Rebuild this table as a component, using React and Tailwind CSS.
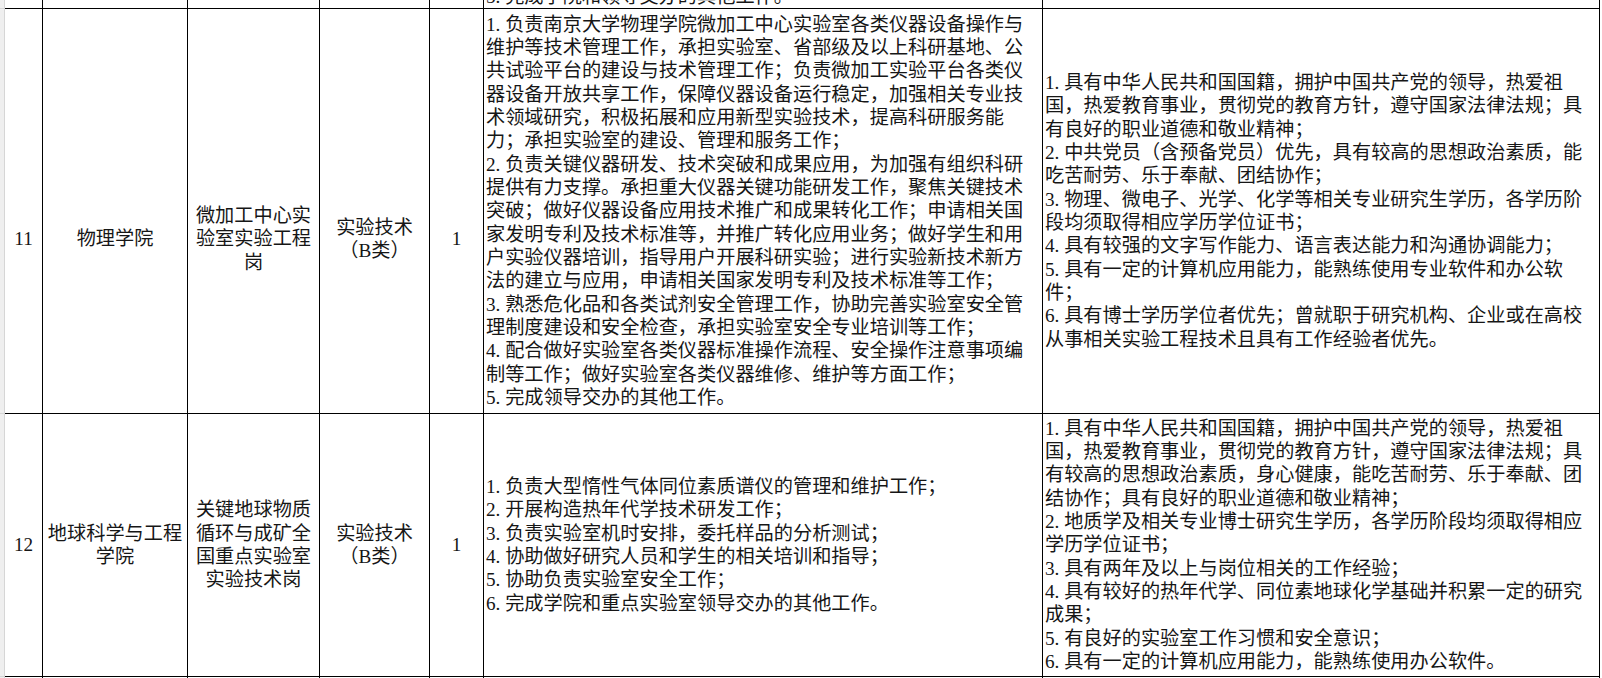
import React from 'react';

const rows = [
  {
    no: '11',
    college: ['物理学院'],
    post: ['微加工中心实', '验室实验工程', '岗'],
    kind: ['实验技术', '（B类）'],
    count: '1',
    shift: true,
    duties: [
      '1. 负责南京大学物理学院微加工中心实验室各类仪器设备操作与',
      '维护等技术管理工作，承担实验室、省部级及以上科研基地、公',
      '共试验平台的建设与技术管理工作；负责微加工实验平台各类仪',
      '器设备开放共享工作，保障仪器设备运行稳定，加强相关专业技',
      '术领域研究，积极拓展和应用新型实验技术，提高科研服务能',
      '力；承担实验室的建设、管理和服务工作；',
      '2. 负责关键仪器研发、技术突破和成果应用，为加强有组织科研',
      '提供有力支撑。承担重大仪器关键功能研发工作，聚焦关键技术',
      '突破；做好仪器设备应用技术推广和成果转化工作；申请相关国',
      '家发明专利及技术标准等，并推广转化应用业务；做好学生和用',
      '户实验仪器培训，指导用户开展科研实验；进行实验新技术新方',
      '法的建立与应用，申请相关国家发明专利及技术标准等工作；',
      '3. 熟悉危化品和各类试剂安全管理工作，协助完善实验室安全管',
      '理制度建设和安全检查，承担实验室安全专业培训等工作；',
      '4. 配合做好实验室各类仪器标准操作流程、安全操作注意事项编',
      '制等工作；做好实验室各类仪器维修、维护等方面工作；',
      '5. 完成领导交办的其他工作。',
    ],
    reqs: [
      '1. 具有中华人民共和国国籍，拥护中国共产党的领导，热爱祖',
      '国，热爱教育事业，贯彻党的教育方针，遵守国家法律法规；具',
      '有良好的职业道德和敬业精神；',
      '2. 中共党员（含预备党员）优先，具有较高的思想政治素质，能',
      '吃苦耐劳、乐于奉献、团结协作；',
      '3. 物理、微电子、光学、化学等相关专业研究生学历，各学历阶',
      '段均须取得相应学历学位证书；',
      '4. 具有较强的文字写作能力、语言表达能力和沟通协调能力；',
      '5. 具有一定的计算机应用能力，能熟练使用专业软件和办公软',
      '件；',
      '6. 具有博士学历学位者优先；曾就职于研究机构、企业或在高校',
      '从事相关实验工程技术且具有工作经验者优先。',
    ],
  },
  {
    no: '12',
    college: ['地球科学与工程', '学院'],
    post: ['关键地球物质', '循环与成矿全', '国重点实验室', '实验技术岗'],
    kind: ['实验技术', '（B类）'],
    count: '1',
    shift: false,
    duties: [
      '1. 负责大型惰性气体同位素质谱仪的管理和维护工作；',
      '2. 开展构造热年代学技术研发工作；',
      '3. 负责实验室机时安排，委托样品的分析测试；',
      '4. 协助做好研究人员和学生的相关培训和指导；',
      '5. 协助负责实验室安全工作；',
      '6. 完成学院和重点实验室领导交办的其他工作。',
    ],
    reqs: [
      '1. 具有中华人民共和国国籍，拥护中国共产党的领导，热爱祖',
      '国，热爱教育事业，贯彻党的教育方针，遵守国家法律法规；具',
      '有较高的思想政治素质，身心健康，能吃苦耐劳、乐于奉献、团',
      '结协作；具有良好的职业道德和敬业精神；',
      '2. 地质学及相关专业博士研究生学历，各学历阶段均须取得相应',
      '学历学位证书；',
      '3. 具有两年及以上与岗位相关的工作经验；',
      '4. 具有较好的热年代学、同位素地球化学基础并积累一定的研究',
      '成果；',
      '5. 有良好的实验室工作习惯和安全意识；',
      '6. 具有一定的计算机应用能力，能熟练使用办公软件。',
    ],
  },
];

function Lines({ lines }) {
  return lines.map((l, i) => (
    <div key={i} className="whitespace-pre">
      {l}
    </div>
  ));
}

const cell = 'border-r border-b border-black overflow-hidden';
const mid = cell + ' flex flex-col items-center justify-center text-center';
const txt = cell + ' flex flex-col justify-center pl-[2px]';

function App() {
  return (
    <div className="w-[1602px] h-[678px] overflow-hidden bg-white text-[#161616] text-[19.2px] leading-[23.33px] font-[family-name:'Liberation_Serif','Noto_Sans_CJK_SC',serif]">
      <div className="grid grid-cols-[5px_38px_145px_132px_110px_54px_559px_557px] grid-rows-[9px_405px_263px_1px]">
        {/* previous row, clipped at the top */}
        <div className="bg-[#efefef] border-r border-b border-[#d6d6d6]" />
        <div className={cell} />
        <div className={cell} />
        <div className={cell} />
        <div className={cell} />
        <div className={cell} />
        <div className={cell + ' flex flex-col justify-end pl-[2px]'}>
          <div className="whitespace-pre">5. 完成学院和领导交办的其他工作。</div>
        </div>
        <div className={cell} />

        {rows.map((r) => (
          <React.Fragment key={r.no}>
            <div className="bg-[#efefef] border-r border-b border-[#d6d6d6]" />
            <div className={mid + (r.shift ? ' pt-[56px]' : '')}>{r.no}</div>
            <div className={mid + (r.shift ? ' pt-[56px]' : '')}>
              <Lines lines={r.college} />
            </div>
            <div className={mid + (r.shift ? ' pt-[56px]' : '')}>
              <Lines lines={r.post} />
            </div>
            <div className={mid + (r.shift ? ' pt-[56px]' : '')}>
              <Lines lines={r.kind} />
            </div>
            <div className={mid + (r.shift ? ' pt-[56px]' : '')}>{r.count}</div>
            <div className={txt}>
              <Lines lines={r.duties} />
            </div>
            <div className={txt}>
              <Lines lines={r.reqs} />
            </div>
          </React.Fragment>
        ))}

        {/* next row, only a sliver shows */}
        <div className="bg-[#efefef] border-r border-[#d6d6d6]" />
        <div className="border-r border-black" />
        <div className="border-r border-black" />
        <div className="border-r border-black" />
        <div className="border-r border-black" />
        <div className="border-r border-black" />
        <div className="border-r border-black" />
        <div className="border-r border-black" />
      </div>
    </div>
  );
}

export default App;
